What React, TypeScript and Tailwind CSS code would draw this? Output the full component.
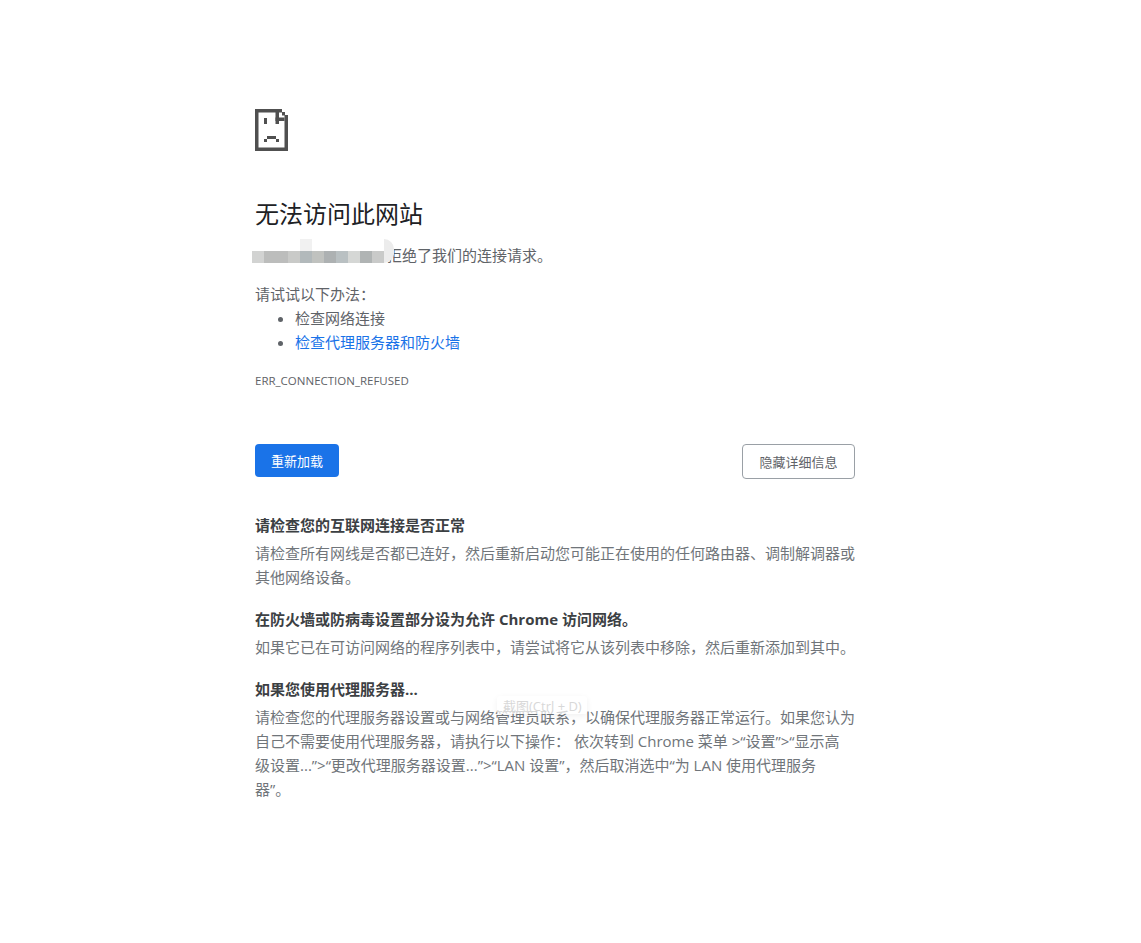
import React from 'react'

const cjk = { fontFamily: '"Open Sans", "Noto Sans CJK SC", sans-serif' }

// pixelated blur over the hostname
const mosaic = ['#d2d3d2', '#bcbdbc', '#bcbdbc', '#c9cac8', '#b2b9bb', '#c0c2bf', '#adb1b2', '#b9c0c2', '#d5d7d5', '#b0b4b4', '#c9cac9']

function SadTab() {
  return (
    <svg width="33" height="42" viewBox="0 0 33 42" fill="#505050">
      <rect x="0" y="0" width="27" height="3.5" />
      <rect x="27" y="3" width="3" height="3.5" />
      <rect x="29.5" y="6" width="3.5" height="36" />
      <rect x="0" y="0" width="3.5" height="42" />
      <rect x="0" y="38.5" width="33" height="3.5" />
      <rect x="20.5" y="3" width="3.5" height="12" />
      <rect x="20.5" y="8.5" width="9" height="3.5" />
      <rect x="9" y="9" width="3" height="6" />
      <rect x="12" y="27" width="9" height="3" />
      <rect x="9" y="30" width="3" height="3" />
      <rect x="21" y="30" width="3" height="3" />
    </svg>
  )
}

export default function App() {
  return (
    <div className="min-h-screen bg-white text-[15px] leading-[24px] text-[#646464]" style={cjk}>
      <div className="ml-[255px] w-[600px] pt-[109px]">
        <SadTab />

        <h1 className="mt-[47px] text-[24px] leading-[32px] font-normal text-[#202124]">无法访问此网站</h1>

        <div className="relative mt-[13px]">
          <p className="pl-[132px] text-[#5f6368]">拒绝了我们的连接请求。</p>
          <div className="absolute left-[-3px] top-[8px] flex h-[12px]">
            {mosaic.map((c, i) => (
              <div key={i} className="h-full w-[12px]" style={{ backgroundColor: c }} />
            ))}
          </div>
          <div className="absolute left-[45px] top-[-4px] h-[12px] w-[12px] bg-[#f1f1f1]" />
          <div className="absolute left-[129px] top-[-4px] h-[24px] w-[10px] rounded-r-full bg-[#ececec]" />
        </div>

        <p className="mt-[15px] text-[#5f6368]">请试试以下办法：</p>
        <ul className="list-disc pl-[40px] text-[#5f6368]">
          <li>检查网络连接</li>
          <li>
            <a className="text-[#1a73e8]">检查代理服务器和防火墙</a>
          </li>
        </ul>

        <div className="mt-[15px] text-[11.5px] leading-[24px] text-[#5f6368]">ERR_CONNECTION_REFUSED</div>

        <div className="mt-[51px] flex items-start justify-between">
          <button className="h-[33px] w-[84px] rounded-[4px] bg-[#1a73e8] text-[13px] font-normal text-white">重新加载</button>
          <button className="h-[35px] w-[113px] rounded-[4px] border border-[#9aa0a6] bg-white text-[13px] font-normal text-[#5f6368]">隐藏详细信息</button>
        </div>

        <div className="relative mt-[34px] text-[#70757a]">
          <h2 className="text-[15px] font-bold text-[#3c4043]">请检查您的互联网连接是否正常</h2>
          <p className="mt-[4px]">请检查所有网线是否都已连好，然后重新启动您可能正在使用的任何路由器、调制解调器或其他网络设备。</p>

          <h2 className="mt-[18px] text-[15px] font-bold text-[#3c4043]">在防火墙或防病毒设置部分设为允许 Chrome 访问网络。</h2>
          <p className="mt-[4px]">如果它已在可访问网络的程序列表中，请尝试将它从该列表中移除，然后重新添加到其中。</p>

          <h2 className="mt-[18px] text-[15px] font-bold text-[#3c4043]">如果您使用代理服务器...</h2>
          <p className="mt-[4px]">
            请检查您的代理服务器设置或与网络管理员联系，以确保代理服务器正常运行。如果您认为自己不需要使用代理服务器，请执行以下操作： 依次转到 Chrome 菜单 &gt;“设置”&gt;“显示高
            <br />
            级设置...”&gt;“更改代理服务器设置...”&gt;“LAN 设置”，然后取消选中“为 LAN 使用代理服务
            <br />
            器”。
          </p>

          <div className="absolute left-[242px] top-[183px] h-[18px] w-[90px] rounded-[3px] bg-white/70 pl-[6px] text-[13px] leading-[20px] whitespace-nowrap text-[#d8d8d8] shadow-[0_2px_6px_rgba(0,0,0,0.06)]">截图(Ctrl + D)</div>
        </div>
      </div>
    </div>
  )
}
